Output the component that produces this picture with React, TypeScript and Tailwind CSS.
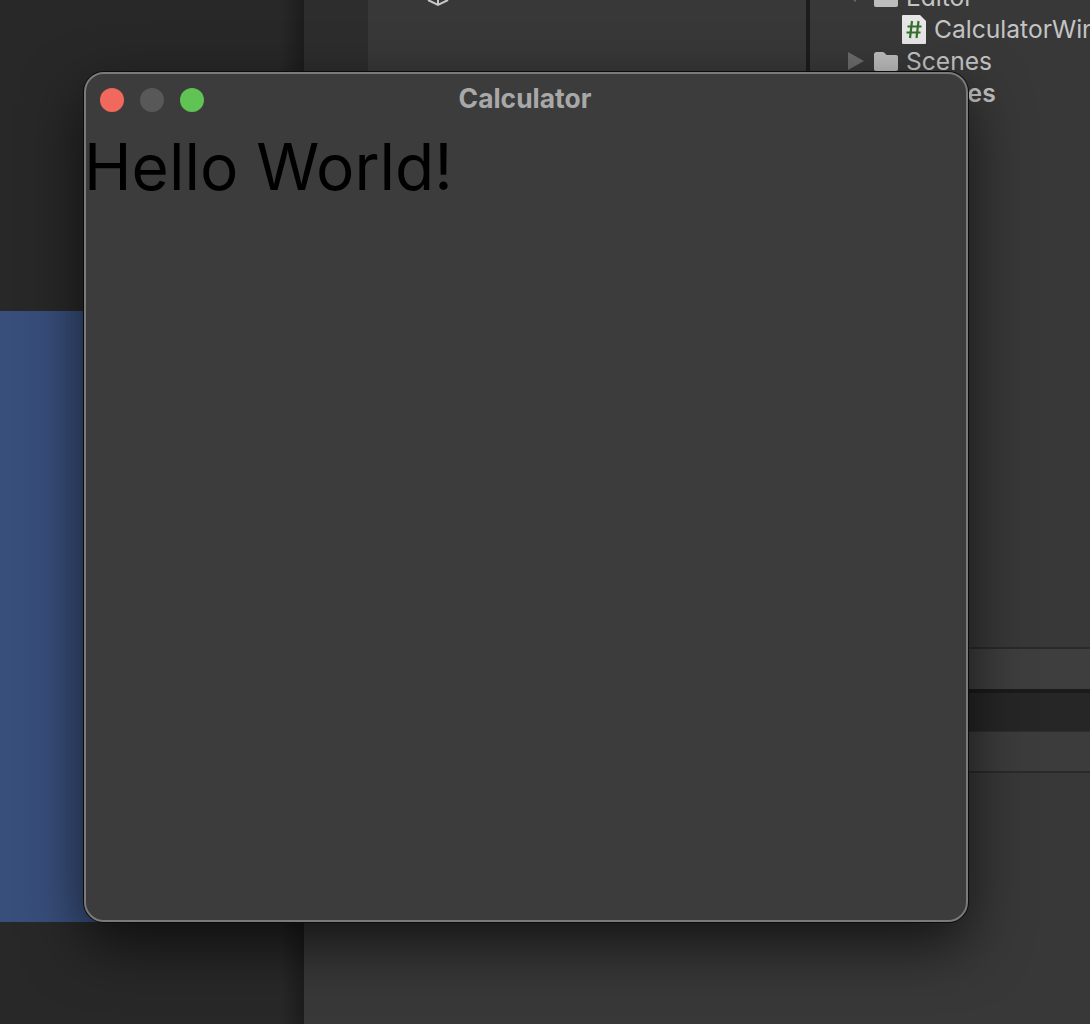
const FONT = "font-['Inter',sans-serif]";

function FolderIcon() {
  return (
    <svg width="26" height="22" viewBox="0 0 26 22" className="shrink-0">
      <path
        d="M1 4.500C1 3 2 2 3.500 2h6.200c.8 0 1.400.3 1.900.9L13.600 5h9.400C24.300 5 25 5.800 25 7v12c0 1.200-.7 2-2 2H3c-1.300 0-2-.8-2-2z"
        fill="#bdbdbd"
      />
    </svg>
  );
}

function CsFileIcon() {
  return (
    <svg width="24" height="29" viewBox="0 0 24 29" className="shrink-0">
      <path d="M1 0h17l6 6v22a1 1 0 0 1-1 1H1a1 1 0 0 1-1-1V1a1 1 0 0 1 1-1z" fill="#e6e6e6" />
      <path
        d="M10 6 8 23M16.500 6l-2 17M5.500 11.500h14M4.500 17.500h14"
        stroke="#33702c"
        strokeWidth="2.200"
        fill="none"
      />
    </svg>
  );
}

function ArrowRight() {
  return (
    <svg width="16" height="18" viewBox="0 0 16 18" className="shrink-0">
      <path d="M0 0l16 9L0 18z" fill="#6c6c6c" />
    </svg>
  );
}

function ArrowDown() {
  return (
    <svg width="14" height="9" viewBox="0 0 14 9" className="shrink-0">
      <path d="M0 0h14L7 9z" fill="#6c6c6c" />
    </svg>
  );
}

function TreePanel() {
  return (
    <div className={`flex flex-col -mt-[19px] text-[24.6px] leading-8 text-[#c4c4c4] ${FONT}`}>
      <div className="flex items-center h-8 pl-[38px]">
        <div className="w-[26px]">
          <ArrowDown />
        </div>
        <div className="ml-[-1px] mr-[7px]">
          <FolderIcon />
        </div>
        <span>Editor</span>
      </div>
      <div className="flex items-center h-8 pl-[92px] gap-2">
        <CsFileIcon />
        <span className="whitespace-nowrap">CalculatorWindow</span>
      </div>
      <div className="flex items-center h-8 pl-[38px]">
        <div className="w-[26px]">
          <ArrowRight />
        </div>
        <div className="ml-[-1px] mr-[7px]">
          <FolderIcon />
        </div>
        <span>Scenes</span>
      </div>
      <div className="flex items-center h-8 pl-[70px] font-semibold">
        <span>Packages</span>
      </div>
    </div>
  );
}

function Window() {
  return (
    <div className="absolute left-[84px] top-[72px] w-[884px] h-[850px] rounded-[20px] bg-[#3c3c3c] border-2 border-[#7a7a7a] shadow-[0_0_0_1px_#0c0c0c,0_22px_60px_rgba(0,0,0,0.65)]">
      <div className="relative flex items-center h-[53px] pl-[14px] gap-4">
        <span className="w-6 h-6 rounded-full bg-[#f1695c] -mt-[1px]" />
        <span className="w-6 h-6 rounded-full bg-[#585858] -mt-[1px]" />
        <span className="w-6 h-6 rounded-full bg-[#5fc454] -mt-[1px]" />
        <span
          className={`absolute inset-x-0 top-[6px] text-center text-[26.4px] leading-9 font-bold text-[#a8a8a8] -ml-[2px] ${FONT}`}
        >
          Calculator
        </span>
      </div>
      <div className={`text-[64px] leading-[80px] text-black -ml-[2px] ${FONT}`}>Hello World!</div>
    </div>
  );
}

export default function App() {
  return (
    <div className="relative flex w-[1090px] h-[1024px] overflow-hidden bg-[#383838]">
      {/* Scene view */}
      <div className="relative flex flex-col w-[304px] shrink-0">
        <div className="h-[311px] bg-[#282828]" />
        <div className="h-[611px] bg-[#384e7b]" />
        <div className="flex-1 bg-[#282828]" />
        <div className="absolute inset-y-0 right-0 w-6 bg-gradient-to-r from-transparent to-black/30" />
      </div>

      <div className="flex flex-col flex-1 min-w-0">
        <div className="flex h-[647px] shrink-0">
          {/* Hierarchy */}
          <div className="w-[64px] shrink-0 bg-[#2d2d2d]" />
          <div className="relative w-[438px] shrink-0 bg-[#383838] overflow-hidden">
            <svg width="24" height="8" viewBox="0 0 24 8" className="absolute left-[58px] top-0">
              <path d="M2 0l10 5 10-5M12 0v5" stroke="#c8c8c8" strokeWidth="2" fill="none" />
            </svg>
          </div>
          <div className="w-[4px] shrink-0 bg-[#1c1c1c]" />

          {/* Project panel */}
          <div className="flex-1 min-w-0 overflow-hidden">
            <TreePanel />
          </div>
        </div>

        {/* Console rows */}
        <div className="h-[42px] shrink-0 bg-[#3e3e3e] border-t-2 border-[#2a2a2a]" />
        <div className="h-[42px] shrink-0 bg-[#262626] border-t-4 border-[#1b1b1b]" />
        <div className="h-[42px] shrink-0 bg-[#3c3c3c] border-t border-b-2 border-t-[#2e2e2e] border-b-[#2a2a2a]" />
        <div className="flex-1 bg-[#383838]" />
      </div>

      <Window />
    </div>
  );
}
